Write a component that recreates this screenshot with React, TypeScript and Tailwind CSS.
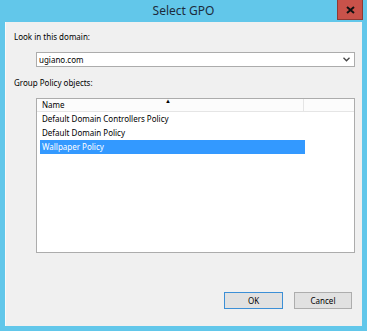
import React from "react";

const items = [
  { name: "Default Domain Controllers Policy", selected: false },
  { name: "Default Domain Policy", selected: false },
  { name: "Wallpaper Policy", selected: true },
];

export default function App(): JSX.Element {
  return (
    <div
      className="w-[367px] h-[331px] bg-[#62c7ea] flex flex-col text-[#000] overflow-hidden"
      style={{ fontFamily: '"Noto Sans", "Open Sans", sans-serif' }}
    >
      {/* title bar */}
      <div className="relative h-[22px] flex items-center justify-center shrink-0">
        <span className="text-[12px] leading-none text-[#1c2c3c] pb-[1px]">Select GPO</span>
        <button className="absolute right-[4px] top-0 w-[26px] h-[20px] bg-[#c9524a] border border-[#8e3a33] border-t-0 flex items-center justify-center">
          <svg width="9" height="8" viewBox="0 0 9 8">
            <path d="M1 1 L8 7 M8 1 L1 7" stroke="#111" strokeWidth="2" />
          </svg>
        </button>
      </div>

      {/* client area */}
      <div className="mx-[5px] h-[304px] bg-[#f0f0f0] border-l border-[#fafafa] flex flex-col text-[8px] leading-[12px]">
        <div className="ml-[8px] mt-[9px]">Look in this domain:</div>

        <div className="ml-[30px] mt-[9px] w-[319px] h-[15px] bg-white border border-[#acacac] flex items-center justify-between pl-[2px] pr-[4px]">
          <span>ugiano.com</span>
          <svg width="7" height="5" viewBox="0 0 7 5">
            <path d="M0.5 0.8 L3.5 3.8 L6.5 0.8" stroke="#444" strokeWidth="1.3" fill="none" />
          </svg>
        </div>

        <div className="ml-[8px] mt-[10px]">Group Policy objects:</div>

        <div className="ml-[30px] mt-[9px] w-[319px] h-[155px] bg-white border border-[#acacac] flex flex-col">
          <div className="h-[13px] flex border-b border-[#e5e5e5] bg-[#fcfcfc] shrink-0">
            <div className="relative w-[267px] border-r border-[#e5e5e5] pl-[5px] flex items-center">
              <span>Name</span>
              <span className="absolute left-[128px] top-[-1px] text-[6px] leading-none">▲</span>
            </div>
            <div className="flex-1" />
          </div>
          <div>
            {items.map((it) => (
              <div
                key={it.name}
                className={
                  "ml-[3px] w-[265px] h-[14px] pl-[2px] flex items-center " +
                  (it.selected ? "bg-[#3399ff] text-white" : "")
                }
              >
                {it.name}
              </div>
            ))}
          </div>
        </div>

        <div className="mt-auto mb-[17px] mr-[10px] flex justify-end gap-[11px]">
          <button className="w-[59px] h-[17px] bg-[#e1e1e1] border border-[#3c8fd6] flex items-center justify-center">
            OK
          </button>
          <button className="w-[58px] h-[17px] bg-[#e1e1e1] border border-[#adadad] flex items-center justify-center">
            Cancel
          </button>
        </div>
      </div>
    </div>
  );
}
